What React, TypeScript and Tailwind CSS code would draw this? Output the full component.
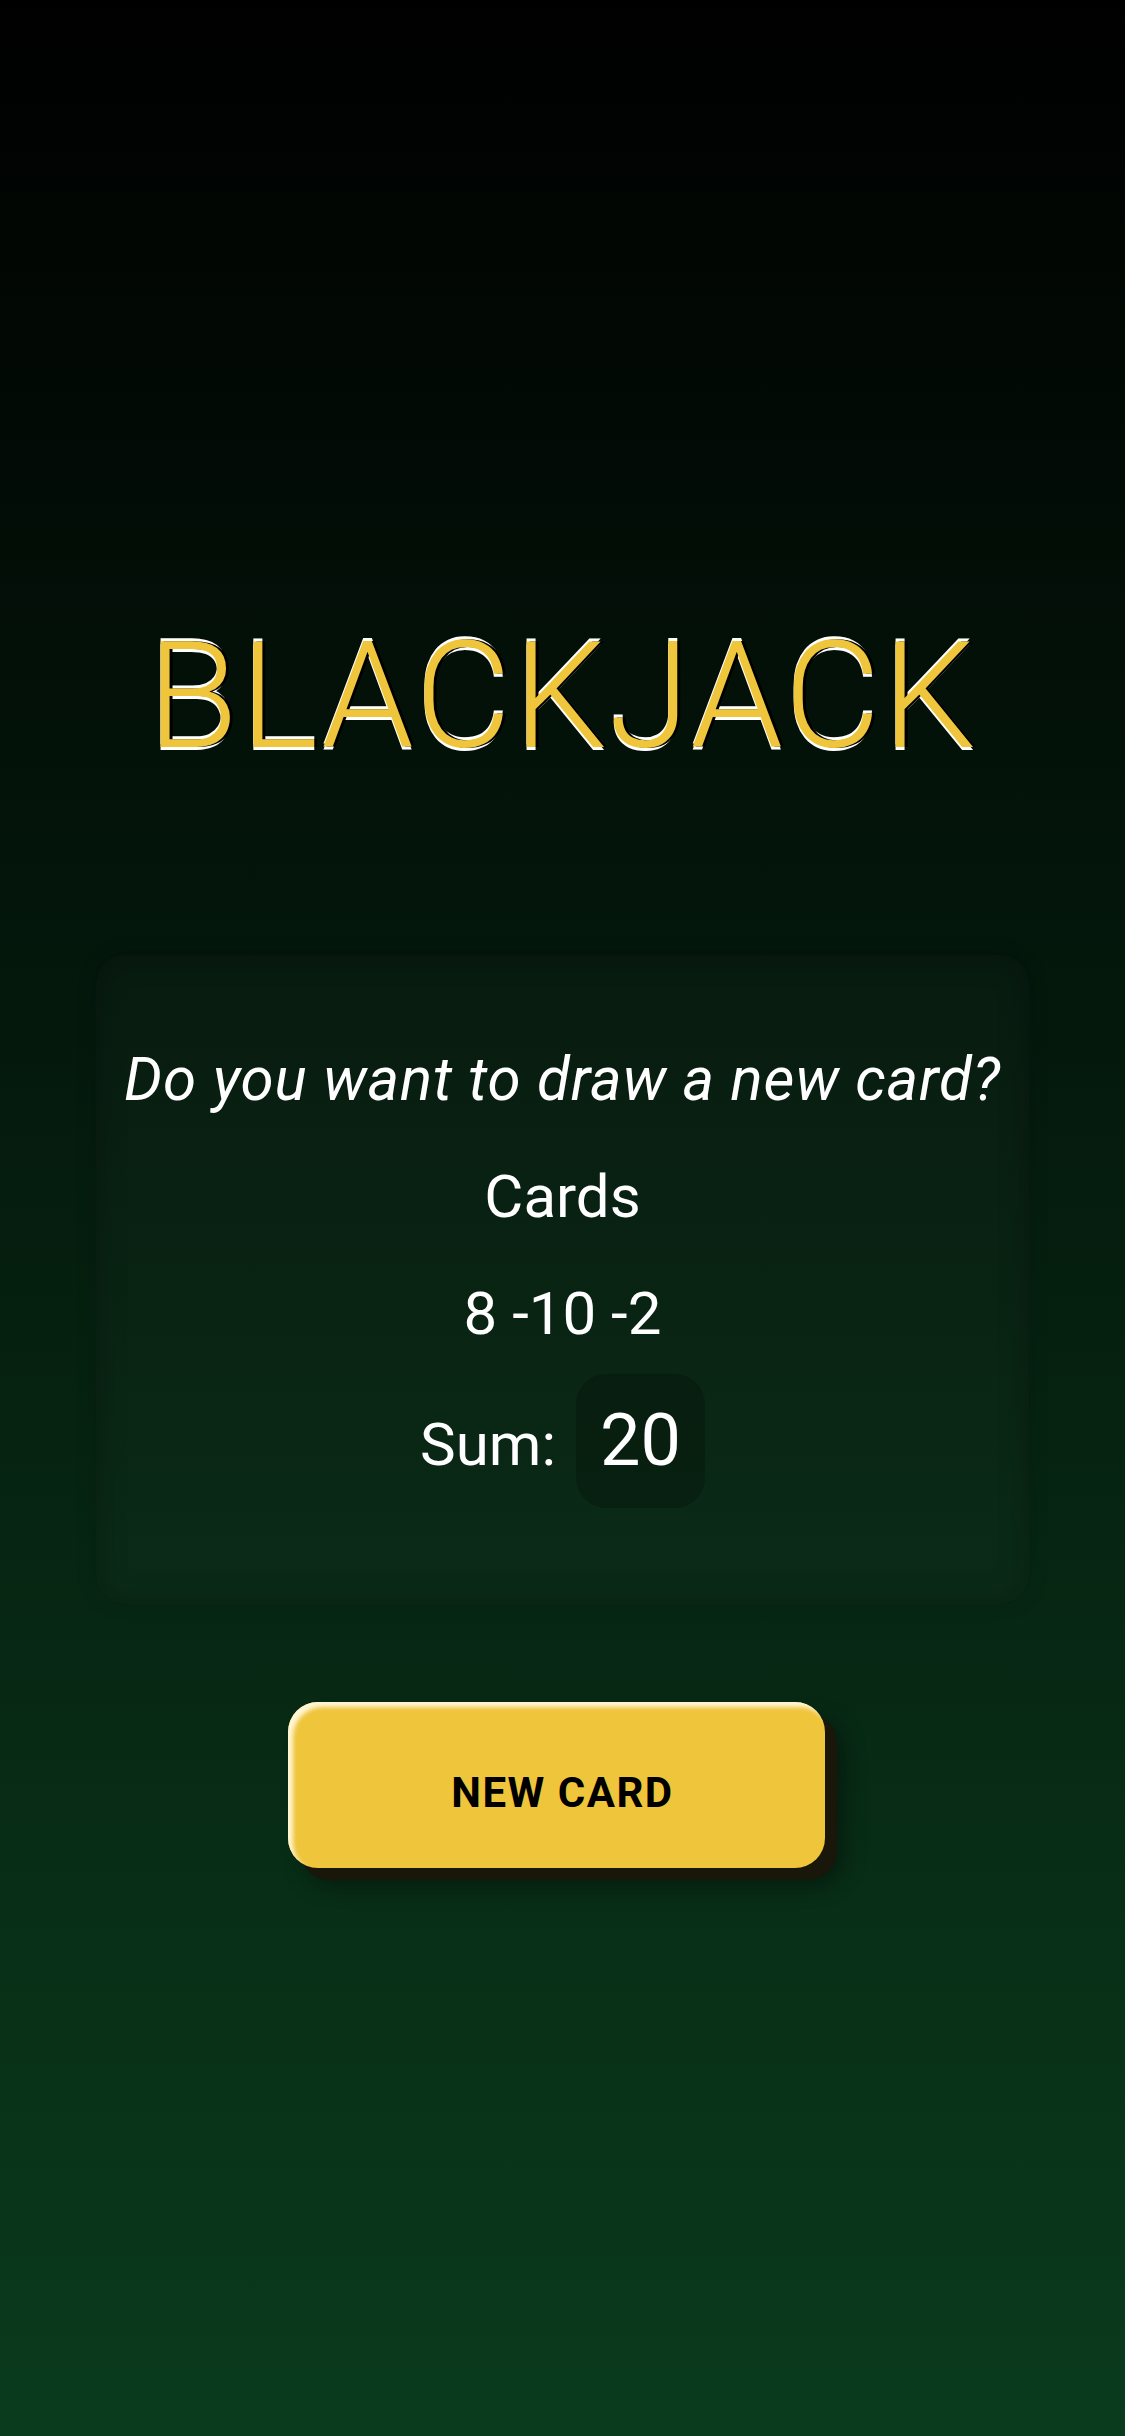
export default function App() {
  return (
    <div className="min-h-screen w-full bg-[linear-gradient(to_bottom,#000000,#0a3b1d)] font-['Roboto',sans-serif] flex flex-col items-center pt-[610px]">
      <h1 className="text-[148px] font-light leading-[173px] tracking-[2px] text-[#efc53b] [text-shadow:3px_0_0_#000,0_-3px_0_#fff,0_3px_0_#fff]">
        BLACKJACK
      </h1>

      <div className="mt-[172px] w-[933px] rounded-[28px] bg-[#ffffff05] shadow-[inset_0_0_30px_rgba(0,0,0,0.25),0_0_20px_rgba(0,0,0,0.15)] pt-[90px] pb-[96px] flex flex-col items-center text-white">
        <p className="text-[60px] italic leading-[70px] tracking-[0.8px]">Do you want to draw a new card?</p>
        <p className="mt-[47px] text-[60px] leading-[70px]">Cards</p>
        <p className="mt-[47px] text-[60px] leading-[70px]">8 -10 -2</p>
        <div className="mt-[25px] flex items-baseline gap-5">
          <span className="text-[60px] leading-[70px]">Sum:</span>
          <span className="rounded-[30px] bg-black/20 px-6 py-[25px] text-[72px] leading-[84px]">20</span>
        </div>
      </div>

      <button className="mt-[98px] mr-[12px] w-[537px] h-[166px] rounded-[30px] bg-[#efc53b] pt-[14px] pl-[12px] text-[42px] font-bold tracking-[1.5px] text-black shadow-[inset_5px_5px_4px_#fff6d5,12px_12px_0_#19160a,18px_18px_22px_rgba(0,0,0,0.4)]">
        NEW CARD
      </button>
    </div>
  )
}
